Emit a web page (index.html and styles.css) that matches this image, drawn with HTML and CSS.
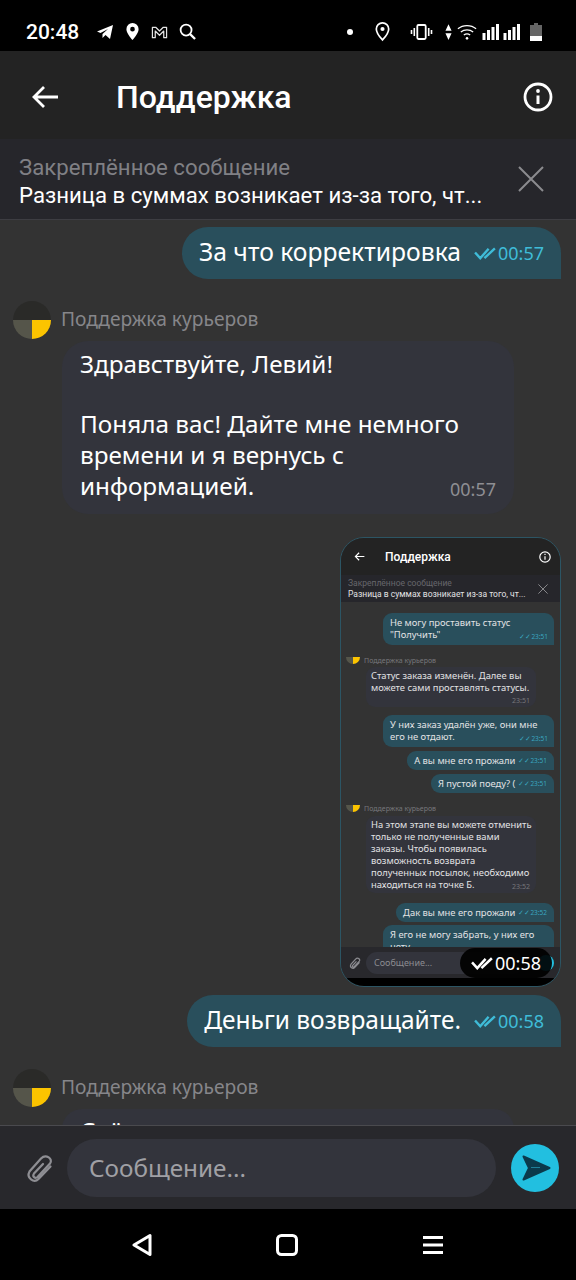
FILE: index.html
```html
<!DOCTYPE html>
<html lang="ru">
<head>
  <meta charset="UTF-8" />
  <meta name="viewport" content="width=device-width, initial-scale=1" />
  <title>Поддержка</title>
  <link rel="stylesheet" href="styles.css">
</head>
<body>

<div class="status-bar">
  <span class="clock">20:48</span>
  <svg width="18" height="16" viewBox="0 0 18 16"><path d="M1 7.500 17 1 14 15 9.500 11 6.500 14 6.500 10 12 5 4.500 9Z" fill="#fff"/></svg>
  <svg width="15" height="19" viewBox="0 0 16 20"><path d="M8 1a6.500 6.500 0 0 0-6.500 6.500C1.500 12 8 19 8 19s6.500-7 6.500-11.500A6.500 6.500 0 0 0 8 1Zm0 9a2.500 2.500 0 1 1 0-5 2.500 2.500 0 0 1 0 5Z" fill="#fff"/></svg>
  <svg width="17" height="14" viewBox="0 0 18 14"><path d="M1.500 13V2H5L9 6 13 2H16.500V13H13.500V6L9 10.500 4.500 6V13Z" fill="none" stroke="#e4e4e4" stroke-width="1.300" stroke-linejoin="round"/></svg>
  <svg width="17" height="17" viewBox="0 0 18 18"><circle cx="7.500" cy="7.500" r="5.800" fill="none" stroke="#fff" stroke-width="1.900"/><path d="M11.500 11.500 17 17" stroke="#fff" stroke-width="2.400"/></svg>
  <span class="status-right">
    <span class="dot"></span>
    <svg class="pin" width="15" height="21" viewBox="0 0 16 21"><path d="M8 1.200a6.600 6.600 0 0 0-6.600 6.600C1.400 12.500 8 19.500 8 19.500s6.600-7 6.600-11.700A6.600 6.600 0 0 0 8 1.200Z" fill="none" stroke="#fff" stroke-width="1.800"/><circle cx="8" cy="7.800" r="2.200" fill="#fff"/></svg>
    <svg class="vib" width="23" height="16" viewBox="0 0 22 16"><rect x="6.800" y="1" width="8.400" height="14" rx="1.200" fill="none" stroke="#fff" stroke-width="1.800"/><path d="M3.800 4v8M1 6v4M18.200 4v8M21 6v4" stroke="#fff" stroke-width="1.600"/></svg>
    <svg class="arrows" width="7" height="18" viewBox="0 0 8 18"><path d="M4 0 7.500 7.500H.5ZM4 18 .5 10.500H7.500Z" fill="#fff"/></svg>
    <svg class="wifi" width="20" height="18" viewBox="0 0 22 18"><path d="M1 5.500C6.500.8 15.500.8 21 5.500M4.200 9C8 6 14 6 17.800 9M7.500 12.300c2-1.400 5-1.400 7 0" fill="none" stroke="#fff" stroke-width="1.400"/><circle cx="11" cy="16" r="1.400" fill="#fff"/></svg>
    <svg class="signal" width="39" height="17" viewBox="0 0 38 17"><path d="M1.500 17V10M6 17V7M10.500 17V4M15 17V1M22.500 17V10M27 17V7M31.500 17V4M36 17V1" stroke="#fff" stroke-width="3"/></svg>
    <svg width="12" height="18" viewBox="0 0 12 18"><path d="M4 0H8V2H12V18H0V2H4Z" fill="#666"/><rect y="13" width="12" height="5" fill="#fff"/></svg>
  </span>
</div>

<header class="topbar">
  <svg width="28" height="24" viewBox="0 0 28 24"><path d="M27 12H3M13 2 3 12 13 22" fill="none" stroke="#fff" stroke-width="2.800"/></svg>
  <h1>Поддержка</h1>
  <svg width="30" height="30" viewBox="0 0 30 30"><circle cx="15" cy="15" r="13" fill="none" stroke="#fff" stroke-width="2.800"/><circle cx="15" cy="9" r="1.900" fill="#fff"/><path d="M15 13.500V22" stroke="#fff" stroke-width="3"/></svg>
</header>

<div class="pinned">
  <div>
    <div class="pinned-label">Закреплённое сообщение</div>
    <div class="pinned-msg">Разница в суммах возникает из-за того, чт...</div>
  </div>
  <svg width="26" height="26" viewBox="0 0 26 26"><path d="M1 1 25 25M25 1 1 25" stroke="#8b8b8f" stroke-width="2"/></svg>
</div>

<main class="chat">
  <div class="msg-out">
    <span>За что корректировка</span>
    <span class="meta">
      <svg width="24" height="13" viewBox="0 0 23 12"><path d="M1 5 6 10.500 14 1.500M10 10.500 20 1" fill="none" stroke="#3fbcd8" stroke-width="2.300"/></svg>00:57
    </span>
  </div>

  <div class="sender">
    <span class="avatar"></span>
    <span class="sender-name">Поддержка курьеров</span>
  </div>
  <div class="msg-in">
    <p>Здравствуйте, Левий!</p>
    <p>Поняла вас! Дайте мне немного времени и я вернусь с информацией.</p>
    <span class="meta-in">00:57</span>
  </div>

  <div class="shot">
    <div class="shot-top">
      <svg width="11" height="9" viewBox="0 0 28 24"><path d="M27 12H3M13 2 3 12 13 22" fill="none" stroke="#fff" stroke-width="3"/></svg>
      <span class="shot-title">Поддержка</span>
      <svg width="12" height="12" viewBox="0 0 30 30"><circle cx="15" cy="15" r="13" fill="none" stroke="#fff" stroke-width="3"/><path d="M15 13V22M15 7V10" stroke="#fff" stroke-width="3"/></svg>
    </div>
    <div class="shot-pinned">
      <div>
        <div class="shot-pinned-label">Закреплённое сообщение</div>
        <div class="shot-pinned-msg">Разница в суммах возникает из-за того, чт...</div>
      </div>
      <svg width="10" height="10" viewBox="0 0 26 26"><path d="M1 1 25 25M25 1 1 25" stroke="#8b8b8f" stroke-width="2.500"/></svg>
    </div>
    <div class="shot-chat">
      <div class="s-out s-wide">Не могу проставить статус<br>"Получить"<span class="s-time">✓✓23:51</span></div>
      <div class="s-sender"><span class="s-avatar"></span>Поддержка курьеров</div>
      <div class="s-in s-short">Статус заказа изменён. Далее вы<br>можете сами проставлять статусы.<span class="s-time-in">23:51</span></div>
      <div class="s-out s-wide s-gap">У них заказ удалён уже, они мне<br>его не отдают.<span class="s-time">✓✓23:51</span></div>
      <div class="s-out s-line">А вы мне его прожали<span class="s-time-line">✓✓23:51</span></div>
      <div class="s-out s-line">Я пустой поеду? (<span class="s-time-line">✓✓23:51</span></div>
      <div class="s-sender s-sender2"><span class="s-avatar"></span>Поддержка курьеров</div>
      <div class="s-in s-long">На этом этапе вы можете отменить<br>только не полученные вами<br>заказы. Чтобы появилась<br>возможность возврата<br>полученных посылок, необходимо<br>находиться на точке Б.<span class="s-time-in">23:52</span></div>
      <div class="s-out s-line s-gap2">Дак вы мне его прожали<span class="s-time-line">✓✓23:52</span></div>
      <div class="s-out s-wide s-cut">Я его не могу забрать, у них его<br>нету<span class="s-time">✓✓23:52</span></div>
    </div>
    <div class="shot-input">
      <svg width="12" height="14" viewBox="0 0 29 32"><path d="M25.500 14.500 13.500 27C9 31.500 1 26 4.500 19.500L16 6.500C21 1.500 28.500 7 25 11.500L12.500 25C10 27 7 24.500 9 21.500L18 12" fill="none" stroke="#8b8b90" stroke-width="3"/></svg>
      <span class="shot-field">Сообщение...</span>
      <span class="shot-send"></span>
    </div>
    <div class="shot-nav"></div>
    <div class="shot-stamp">
      <svg width="24" height="13" viewBox="0 0 23 12"><path d="M1 5 6 10.500 14 1.500M10 10.500 20 1" fill="none" stroke="#fff" stroke-width="2.400"/></svg>00:58
    </div>
  </div>

  <div class="msg-out msg-money">
    <span>Деньги возвращайте.</span>
    <span class="meta">
      <svg width="24" height="13" viewBox="0 0 23 12"><path d="M1 5 6 10.500 14 1.500M10 10.500 20 1" fill="none" stroke="#3fbcd8" stroke-width="2.300"/></svg>00:58
    </span>
  </div>

  <div class="sender">
    <span class="avatar"></span>
    <span class="sender-name">Поддержка курьеров</span>
  </div>
  <div class="msg-in msg-cut">
    <p>Счёт</p>
  </div>
</main>

<div class="composer">
  <svg class="clip" width="29" height="32" viewBox="0 0 29 32"><path d="M25.500 14.500 13.500 27C9 31.500 1 26 4.500 19.500L16 6.500C21 1.500 28.500 7 25 11.500L12.500 25C10 27 7 24.500 9 21.500L18 12" fill="none" stroke="#8e8e93" stroke-width="2.200" stroke-linecap="round"/></svg>
  <div class="field">Сообщение...</div>
  <span class="send">
    <svg width="29" height="26" viewBox="0 0 29 26"><path d="M1.500 1.500 27.500 13 1.500 24.500 7 13Z" fill="#0b3a4c" stroke="#0b3a4c" stroke-width="2" stroke-linejoin="round"/><path d="M9 12.500H18" stroke="#1f7f99" stroke-width="1"/></svg>
  </span>
</div>

<nav class="navbar">
  <svg width="20" height="24" viewBox="0 0 20 24"><path d="M18 2.500V21.500L2 12Z" fill="none" stroke="#fff" stroke-width="3" stroke-linejoin="round"/></svg>
  <svg width="22" height="22" viewBox="0 0 22 22"><rect x="1.500" y="1.500" width="19" height="19" rx="4" fill="none" stroke="#fff" stroke-width="3"/></svg>
  <svg width="22" height="20" viewBox="0 0 22 20"><path d="M1 2.500H21M1 10H21M1 17.500H21" stroke="#fff" stroke-width="3"/></svg>
</nav>

</body>
</html>
```

FILE: styles.css
```css
* {
  box-sizing: border-box;
}
html, body {
  margin: 0;
  height: 1280px;
  overflow: hidden;
}
body {
  width: 576px;
  display: flex;
  flex-direction: column;
  background: #333333;
  color: #fff;
  font-family: "Noto Sans", "Open Sans", sans-serif;
}

/* status bar */
.status-bar {
  height: 51px;
  flex: none;
  background: #000;
  display: flex;
  align-items: center;
  padding: 12px 34px 0 26px;
  gap: 11px;
}
.clock {
  font-family: Roboto, sans-serif;
  font-size: 21px;
  font-weight: 500;
  margin-right: 6px;
}
.status-right {
  margin-left: auto;
  display: flex;
  align-items: center;
}
.dot {
  width: 6px;
  height: 6px;
  border-radius: 50%;
  background: #fff;
  margin-right: 22px;
}
.pin { margin-right: 20px; }
.vib { margin-right: 12px; }
.arrows { margin-right: 5px; }
.wifi { margin-right: 5px; }
.signal { margin-right: 9px; }

/* header */
.topbar {
  height: 88px;
  flex: none;
  background: #232323;
  display: flex;
  align-items: center;
  padding: 3px 23px 0 31px;
}
.topbar h1 {
  margin: 0 0 0 57px;
  font-family: Roboto, sans-serif;
  font-size: 32px;
  font-weight: 500;
  flex: 1;
}

.pinned {
  height: 81px;
  flex: none;
  background: #26262b;
  border-bottom: 1px solid #3d3d42;
  display: flex;
  align-items: center;
  justify-content: space-between;
  padding: 0 32px 0 19px;
}
.pinned-label {
  color: #808085;
  font-family: Roboto, sans-serif;
  font-size: 22.200px;
  line-height: 28px;
  padding-top: 3px;
}
.pinned-msg {
  font-family: Roboto, sans-serif;
  font-size: 22.200px;
  line-height: 28px;
}

/* messages */
.chat {
  flex: 1;
  min-height: 0;
  overflow: hidden;
  display: flex;
  flex-direction: column;
  align-items: flex-start;
  padding: 7px 15px 0 13px;
}
.chat > * {
  flex: none;
}
.msg-out {
  align-self: flex-end;
  height: 52px;
  background: #294f5c;
  border-radius: 26px 26px 0 26px;
  padding: 0 17px 3px;
  display: flex;
  align-items: center;
  gap: 13px;
  font-size: 24.700px;
}
.msg-money {
  margin-top: 8px;
  font-size: 24.500px;
}
.meta {
  color: #3fbcd8;
  font-size: 18px;
  display: flex;
  align-items: center;
  padding-top: 3px;
}
.sender {
  display: flex;
  align-items: center;
  gap: 11px;
  margin-top: 22px;
  height: 38px;
}
.avatar {
  width: 38px;
  height: 38px;
  border-radius: 50%;
  background:
    linear-gradient(#2a2a28 50%, transparent 50%),
    linear-gradient(90deg, #55554a 50%, #fcc400 50%);
}
.sender-name {
  color: #86868a;
  font-size: 19.200px;
  margin-left: -1px;
  margin-top: -3px;
}
.msg-in {
  margin: 2px 0 0 49px;
  width: 452px;
  background: #33343c;
  border-radius: 26px;
  padding: 7px 18px 13px;
  font-size: 24.300px;
  line-height: 31px;
  position: relative;
}
.msg-in p {
  margin: 0 0 29px;
}
.msg-in p:last-of-type {
  margin: 0;
  width: 395px;
}
.meta-in {
  position: absolute;
  right: 18px;
  bottom: 14px;
  font-size: 18px;
  line-height: 22px;
  color: #8e8e93;
}
.msg-cut {
  height: 40px;
  padding-top: 6px;
}

/* screenshot inside the chat */
.shot {
  align-self: flex-end;
  width: 221px;
  height: 450px;
  margin-top: 23px;
  background: #333333;
  border: 1px solid #2c5564;
  border-radius: 24px;
  overflow: hidden;
  display: flex;
  flex-direction: column;
  position: relative;
  font-size: 9.400px;
  color: #e2e2e4;
}
.shot-top {
  height: 37px;
  flex: none;
  background: #232323;
  display: flex;
  align-items: center;
  padding: 0 9px 0 13px;
  justify-content: space-between;
}
.shot-title {
  flex: 1;
  margin-left: 20px;
  color: #fff;
  font-family: Roboto, sans-serif;
  font-size: 12px;
  font-weight: 500;
}
.shot-pinned {
  height: 27px;
  flex: none;
  background: #26262b;
  display: flex;
  align-items: center;
  justify-content: space-between;
  padding: 0 12px 0 7px;
  font-family: Roboto, sans-serif;
  font-size: 8.500px;
  line-height: 11px;
}
.shot-pinned-label {
  color: #66666b;
}
.shot-pinned-msg {
  color: #e2e2e4;
}
.shot-chat {
  flex: 1;
  min-height: 0;
  overflow: hidden;
  display: flex;
  flex-direction: column;
  align-items: flex-start;
  padding: 11px 6px 0 5px;
  line-height: 12px;
  white-space: nowrap;
}
.shot-chat > * {
  flex: none;
}
.s-out {
  align-self: flex-end;
  background: #294f5c;
  border-radius: 9px 9px 0 9px;
  padding: 3px 6px;
  position: relative;
}
.s-wide {
  width: 171px;
  height: 32px;
  padding: 4px 8px 0 7px;
}
.s-line {
  height: 19px;
  margin-top: 4px;
  display: flex;
  align-items: center;
  gap: 3px;
  padding: 0 7px;
}
.s-gap {
  margin-top: 8px;
}
.s-gap2 {
  margin-top: 10px;
}
.s-cut {
  margin-top: 3px;
  height: 34px;
}
.s-time {
  position: absolute;
  right: 6px;
  bottom: 4px;
  color: #3fbcd8;
  font-size: 6.500px;
  line-height: 9px;
  opacity: 0.8;
}
.s-time-line {
  color: #3fbcd8;
  font-size: 6.500px;
  opacity: 0.8;
}
.s-sender {
  display: flex;
  align-items: center;
  gap: 4px;
  margin-top: 11px;
  height: 9px;
  font-size: 7px;
  color: #77777b;
}
.s-avatar {
  width: 14px;
  height: 7px;
  border-radius: 0 0 7px 7px;
  background: linear-gradient(90deg, #55554a 50%, #fcc400 50%);
}
.s-in {
  margin: 2px 0 0 20px;
  width: 170px;
  background: #33343c;
  border-radius: 9px;
  padding: 3px 5px;
  position: relative;
}
.s-short {
  height: 40px;
}
.s-long {
  height: 77px;
  margin-top: 3px;
}
.s-time-in {
  position: absolute;
  right: 6px;
  bottom: 2px;
  color: #77777b;
  font-size: 7px;
  line-height: 9px;
}
.shot-input {
  height: 31px;
  flex: none;
  background: #28282c;
  display: flex;
  align-items: center;
  gap: 5px;
  padding: 0 6px 0 8px;
}
.shot-field {
  width: 158px;
  height: 22px;
  border-radius: 11px;
  background: #33343c;
  color: #8b8b90;
  font-size: 9px;
  line-height: 22px;
  padding-left: 8px;
}
.shot-send {
  width: 16px;
  height: 16px;
  margin-left: auto;
  border-radius: 50%;
  background: #22bfe0;
}
.shot-nav {
  height: 8px;
  flex: none;
  background: #000;
}
.shot-stamp {
  position: absolute;
  top: 410px;
  right: 8px;
  width: 92px;
  height: 30px;
  border-radius: 15px;
  background: rgba(0, 0, 0, 0.92);
  color: #fff;
  font-size: 18px;
  display: flex;
  align-items: center;
  justify-content: center;
}

/* bottom */
.composer {
  height: 84px;
  flex: none;
  background: #28282c;
  border-top: 1px solid #4a4a4e;
  display: flex;
  align-items: center;
  padding: 0 17px 0 25px;
}
.clip {
  flex: none;
}
.field {
  margin-left: 13px;
  flex: 1;
  height: 58px;
  border-radius: 29px;
  background: #33343c;
  color: #a0a0a5;
  font-size: 24.300px;
  line-height: 58px;
  padding-left: 22px;
}
.send {
  width: 48px;
  height: 48px;
  flex: none;
  margin-left: 15px;
  border-radius: 50%;
  background: #22bfe0;
  display: flex;
  align-items: center;
  justify-content: center;
  padding-left: 2px;
}
.navbar {
  height: 71px;
  flex: none;
  background: #000;
  display: flex;
  align-items: center;
  justify-content: center;
  gap: 124px;
}
```
